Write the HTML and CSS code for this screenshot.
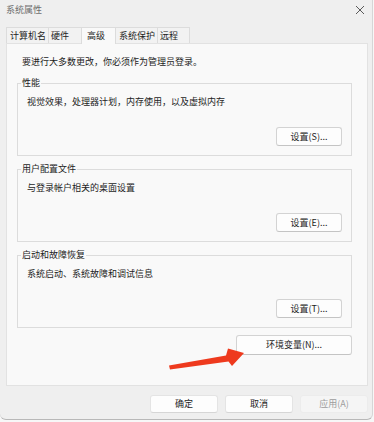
FILE: index.html
```html
<!DOCTYPE html>
<html lang="zh-CN">
<head>
  <meta charset="UTF-8">
  <title>系统属性</title>
  <link rel="stylesheet" href="styles.css">
</head>
<body>
  <div class="window">
    <div class="titlebar">
      <span class="titlebar__text">系统属性</span>
      <svg class="titlebar__close" width="10" height="10" viewBox="0 0 10 10">
        <path d="M1 1 L9 9 M9 1 L1 9" stroke="#5a5a5a" stroke-width="1" fill="none"/>
      </svg>
    </div>

    <div class="tabs">
      <div class="tab tab--w42">计算机名</div>
      <div class="tab tab--w33">硬件</div>
      <div class="tab tab--w35 tab--active">高级</div>
      <div class="tab tab--w41">系统保护</div>
      <div class="tab tab--w33">远程</div>
    </div>

    <div class="panel">
      <p class="panel__intro">要进行大多数更改，你必须作为管理员登录。</p>

      <!-- 性能 -->
      <fieldset class="group">
        <legend class="group__label">性能</legend>
        <p class="group__desc">视觉效果，处理器计划，内存使用，以及虚拟内存</p>
        <div class="group__actions">
          <button class="btn">设置(S)...</button>
        </div>
      </fieldset>

      <!-- 用户配置文件 -->
      <fieldset class="group">
        <legend class="group__label">用户配置文件</legend>
        <p class="group__desc">与登录帐户相关的桌面设置</p>
        <div class="group__actions">
          <button class="btn">设置(E)...</button>
        </div>
      </fieldset>

      <!-- 启动和故障恢复 -->
      <fieldset class="group">
        <legend class="group__label">启动和故障恢复</legend>
        <p class="group__desc">系统启动、系统故障和调试信息</p>
        <div class="group__actions">
          <button class="btn">设置(T)...</button>
        </div>
      </fieldset>

      <div class="panel__actions">
        <button class="btn btn--wide">环境变量(N)...</button>
      </div>
    </div>

    <div class="footer">
      <button class="btn btn--footer">确定</button>
      <button class="btn btn--footer">取消</button>
      <button class="btn btn--footer btn--disabled">应用(A)</button>
    </div>

    <svg class="arrow" width="374" height="422" viewBox="0 0 374 422">
      <polygon points="169,365.5 226,355.5 228,348.5 244,353 232,366 228.5,361.5 170,369.5" fill="#ee3a1e"/>
    </svg>
  </div>
</body>
</html>
```

FILE: styles.css
```css
/* Reset */
*, *::after, *::before {
  margin: 0;
  padding: 0;
  box-sizing: border-box;
}

body {
  width: 374px;
  height: 422px;
  background-color: #f7f7f7;
  font-family: "Noto Sans CJK SC", "Liberation Sans", sans-serif;
  font-size: 9px;
  line-height: 12px;
  color: #1c1c1c;
  overflow: hidden;
}

.window {
  position: relative;
  width: 373px;
  height: 420px;
  background-color: #efefef;
  border-right: 1px solid #d6d6d6;
  border-bottom: 1px solid #b8b8b8;
  border-bottom-left-radius: 6px;
  border-bottom-right-radius: 6px;
}

/* Title bar */
.titlebar {
  height: 21px;
  display: flex;
  align-items: center;
  justify-content: space-between;
  padding: 0 7px 1px 6px;
}

.titlebar__text {
  color: #6e6e6e;
}

.titlebar__close {
  display: block;
}

/* Tabs */
.tabs {
  display: flex;
  align-items: flex-end;
  height: 17px;
  margin-top: 5px;
  padding-left: 6px;
}

.tab {
  height: 16px;
  padding-left: 3px;
  line-height: 15px;
  background-color: #f2f2f2;
  border: 1px solid #dcdcdc;
  border-bottom: none;
  border-right: none;
}

.tab:last-child {
  border-right: 1px solid #dcdcdc;
}

.tab--w42 { width: 42px; }
.tab--w33 { width: 33px; padding-left: 2px; }
.tab--w35 { width: 35px; }
.tab--w41 { width: 41px; }

.tab--active {
  height: 17px;
  padding-left: 5px;
  background-color: #f9f9f9;
  border-right: 1px solid #dcdcdc;
  margin-bottom: -1px;
  position: relative;
  z-index: 1;
}

.tab--active + .tab {
  border-left: none;
}

/* Panel */
.panel {
  height: 343px;
  margin-left: 6px;
  margin-right: 4px;
  padding: 12px 15px 0 10px;
  background-color: #f9f9f9;
  border: 1px solid #e2e2e2;
}

.panel__intro {
  padding-left: 5px;
  margin-bottom: 9px;
}

.group {
  min-width: 0;
  border: 1px solid #dcdcdc;
  padding: 0 9px 9px 9px;
  margin-bottom: 7px;
}

.group__label {
  padding: 0 1px;
  margin-left: -6px;
  line-height: 12px;
}

.group__desc {
  margin-top: 7px;
}

.group__actions {
  display: flex;
  justify-content: flex-end;
  margin-top: 19px;
}

.panel__actions {
  display: flex;
  justify-content: flex-end;
  margin-top: 5px;
}

/* Buttons */
.btn {
  width: 66px;
  height: 19px;
  font-family: inherit;
  font-size: 9px;
  line-height: 12px;
  color: #1c1c1c;
  background-color: #fdfdfd;
  border: 1px solid #d3d3d3;
  border-bottom-color: #c4c4c4;
  border-radius: 3px;
}

.btn--wide {
  width: 116px;
  height: 20px;
}

.footer {
  display: flex;
  justify-content: flex-end;
  gap: 7px;
  margin-top: 9px;
  padding-right: 4px;
}

.btn--footer {
  width: 68px;
  height: 18px;
  border-color: #e4e4e4;
  border-bottom-color: #d6d6d6;
}

.btn--disabled {
  color: #9c9c9c;
  background-color: #f5f5f5;
  border-color: #ececec;
}

/* Arrow overlay */
.arrow {
  position: absolute;
  top: 0;
  left: 0;
  pointer-events: none;
}
```
